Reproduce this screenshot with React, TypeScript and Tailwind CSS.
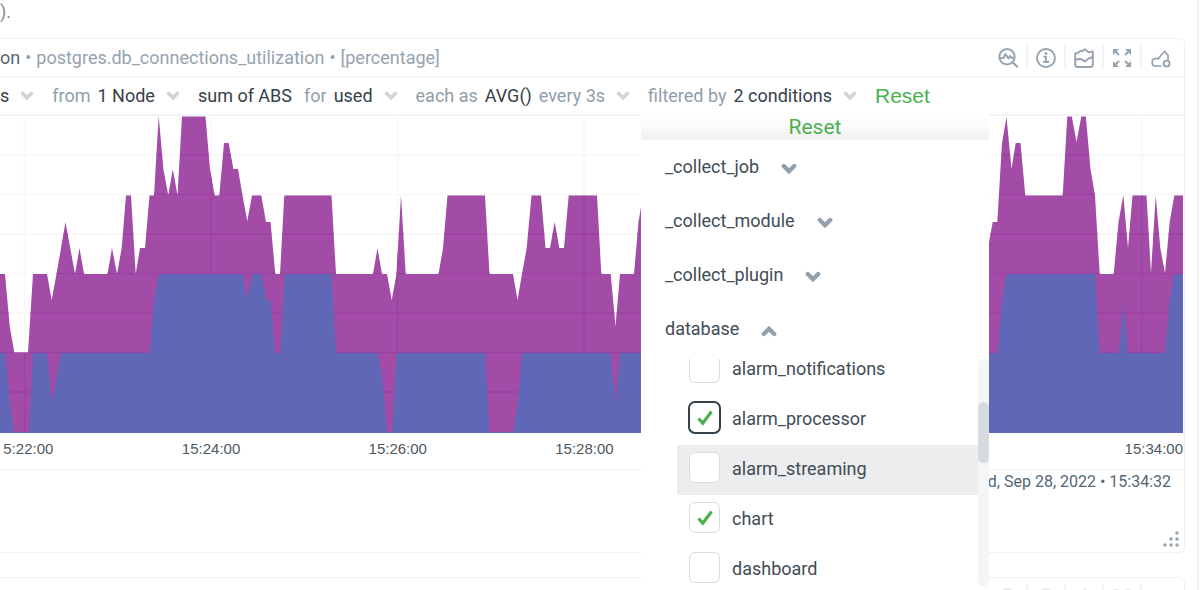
import React, { useState } from "react";

type Point = [number, number];

const totalSeries: Point[] = [
  [0, 274], [5, 274], [9.7, 326], [14.3, 352.5], [28, 352.5], [33, 274], [47, 274], [51.7, 300], [56.5, 274],
  [65.5, 222], [75, 274], [79.5, 248], [84, 274], [107.5, 274], [112, 248], [117, 274], [121.7, 248],
  [126, 195.5], [131, 195.5], [135.7, 274], [140, 248], [145, 248], [149.5, 195.5], [154, 195.5], [158.7, 116],
  [163.5, 170], [168.3, 195.5], [172.8, 169], [177.5, 195.5], [182, 116.5], [205.5, 116.5], [210, 169.5],
  [214.7, 195.5], [219.3, 195.5], [224, 143], [228.7, 143], [233.4, 169], [238, 169], [242.5, 195.5],
  [247.3, 221], [252, 195.5], [261.3, 195.5], [266, 222], [270.5, 222], [275.3, 274], [280, 274],
  [284.3, 195.5], [331.5, 195.5], [336, 274], [373, 274], [377.5, 248], [382, 274], [387, 274], [391.7, 300],
  [396.5, 274], [401, 195], [405.7, 274], [438.5, 274], [443, 248], [447.5, 195.5], [485, 195.5],
  [489.5, 274], [513, 274], [517.5, 300], [522, 274], [526.7, 248], [531.5, 195.5], [541, 195.5], [545.5, 248],
  [550, 248], [554.7, 222], [559.3, 248], [564, 248], [568.7, 195.5], [597, 195.5], [601.3, 274],
  [610.7, 274], [615.5, 326], [620, 274], [634, 274], [638.5, 222], [643, 195.5], [700, 195.5], [705, 274],
  [984, 274], [988, 248], [992.7, 222], [997.3, 222], [1002, 143], [1006.5, 117], [1011.5, 169],
  [1015.7, 143], [1020.5, 143], [1025.3, 195.5], [1062.7, 195.5], [1067.3, 116.5], [1071.8, 116.5],
  [1076.5, 142], [1081.3, 116.5], [1085.8, 116.5], [1090.5, 169], [1095, 195.5], [1099.7, 274], [1113.7, 274],
  [1118.5, 222], [1123.3, 195], [1128, 248], [1132.5, 195.5], [1146.5, 195.5], [1151, 273], [1155.7, 195.5],
  [1160.3, 248], [1165, 273], [1169.7, 222], [1174.3, 195.5], [1183, 195.5],
];

const usedSeries: Point[] = [
  [0, 353], [5.3, 353], [10, 405], [14, 432], [29, 432], [33, 353], [47, 353], [51.7, 403], [61, 353],
  [149.5, 353], [154, 300], [158.7, 274], [242.5, 274], [247, 300], [252, 274], [261.5, 274], [266, 300],
  [270.5, 300], [275, 353], [280.5, 353], [284.5, 274], [331.5, 274], [336, 353], [378, 353], [382.5, 379],
  [387, 432], [392, 432], [396.5, 353], [485, 353], [489.5, 432], [513, 432], [517.5, 405], [522, 353],
  [610.5, 353], [615.5, 403], [620, 353], [997.5, 353], [1002, 300], [1006.5, 274], [1095, 274],
  [1099.7, 353], [1118.7, 353], [1123.3, 302], [1128, 353], [1165, 353], [1169.7, 300], [1174.3, 274],
  [1183, 274],
];

const area = (points: Point[]) =>
  `M0 433 ${points.map(([x, y]) => `L${x} ${y}`).join(" ")} L1183 433Z`;

const gridPath =
  [155, 194.5, 234, 273.5, 313, 352.5, 392].map((y) => `M0 ${y}H1183`).join("") +
  [24.5, 211, 397.5, 584, 770, 957, 1142].map((x) => `M${x} 116V433`).join("");

function Chart() {
  return (
    <svg
      viewBox="0 116 1183 317"
      preserveAspectRatio="none"
      className="block h-[317px] w-full"
      role="img"
      aria-label="Connections utilization"
    >
      <defs>
        <clipPath id="total">
          <path d={area(totalSeries)} />
        </clipPath>
      </defs>
      <path d={gridPath} stroke="#f7f8f9" strokeWidth="1.5" fill="none" />
      <path d={area(totalSeries)} fill="#a24ca7" />
      <path d={gridPath} stroke="#9c40a3" strokeWidth="1.3" fill="none" clipPath="url(#total)" />
      <path d={area(usedSeries)} fill="#5f68b7" fillOpacity=".98" />
    </svg>
  );
}

function Chevron({ up = false, large = false }: { up?: boolean; large?: boolean }) {
  return (
    <svg
      viewBox="0 0 16 12"
      aria-hidden="true"
      className={large ? "h-3 w-4 text-[#93a1ac]" : "h-[10px] w-[14px] text-[#cfd5da]"}
    >
      <path
        d={up ? "M2.8 9 8 3.8 13.2 9" : "M2.8 3 8 8.2 13.2 3"}
        fill="none"
        stroke="currentColor"
        strokeWidth="4.4"
        strokeLinecap="round"
      />
    </svg>
  );
}

const iconProps = {
  viewBox: "0 0 22 22",
  className: "size-[22px]",
  fill: "none",
  stroke: "currentColor",
  strokeWidth: 1.9,
  strokeLinecap: "round" as const,
  strokeLinejoin: "round" as const,
};

const headerIcons: { label: string; icon: React.ReactNode }[] = [
  {
    label: "Metric correlations",
    icon: (
      <svg {...iconProps}>
        <circle cx="10" cy="9.7" r="7.7" />
        <path d="m15.8 15.5 4.2 4" strokeWidth="2.2" />
        <path d="M3 11h3.4l2-4 3 4.6L13.2 9l1.4 1.8h2" />
      </svg>
    ),
  },
  {
    label: "Information",
    icon: (
      <svg {...iconProps}>
        <circle cx="11" cy="11" r="9" />
        <path d="M9.2 9.6H11v5.2M8.8 15h4.6" />
        <circle cx="11" cy="6.6" r="1" fill="currentColor" strokeWidth=".8" />
      </svg>
    ),
  },
  {
    label: "Chart type",
    icon: (
      <svg {...iconProps}>
        <path d="M2.2 6.400 4.800 6 7.600 3.800 9.200 4.200 11.800 2.200 15.600 5.200 19.800 4.400V17.400a2.600 2.600 0 0 1-2.600 2.600H4.800a2.600 2.600 0 0 1-2.600-2.600Z" />
        <path d="m2.400 12.800 5-1 4.600 2.600 3.600-2.800 4.200-1.800" />
      </svg>
    ),
  },
  {
    label: "Fullscreen",
    icon: (
      <svg {...iconProps} strokeLinecap="butt">
        <path d="M3 3l5 5M19 3l-5 5M3 19l5-5M19 19l-5-5" strokeWidth="2" />
        <path d="M2 2h6L2 8ZM20 2h-6l6 6ZM2 20h6l-6-6ZM20 20h-6l6-6Z" fill="currentColor" stroke="none" />
      </svg>
    ),
  },
  {
    label: "Add to dashboard",
    icon: (
      <svg {...iconProps} strokeWidth={1.7}>
        <path d="M11 19H5.200A3 3 0 0 1 2.200 16.200L2.400 12.800 5.200 11.400 8.400 11.800 11 8.200 14.600 4.200 18 8.400V13" />
        <circle cx="16.600" cy="16.600" r="3" strokeWidth="1.900" />
      </svg>
    ),
  },
];

function HeaderActions({ muted = false }: { muted?: boolean }) {
  return (
    <div
      className={`ml-auto flex shrink-0 divide-x-2 divide-[#f1f3f4] pr-1 ${muted ? "text-[#e6e9eb]" : "text-[#95a3af]"}`}
    >
      {headerIcons.map(({ label, icon }) => (
        <button key={label} type="button" aria-label={label} className="flex h-[25px] w-[38px] items-center justify-center">
          {icon}
        </button>
      ))}
    </div>
  );
}

function Segment({ prefix, value, suffix, arrow = true }: { prefix?: string; value: string; suffix?: string; arrow?: boolean }) {
  return (
    <button type="button" className="flex shrink-0 items-center gap-[7px] text-[#8f9eaa]">
      {prefix && <span>{prefix}</span>}
      <span className="text-[#35414a]">{value}</span>
      {suffix && <span>{suffix}</span>}
      {arrow && (
        <span className="ml-1">
          <Chevron />
        </span>
      )}
    </button>
  );
}

const groups = ["_collect_job", "_collect_module", "_collect_plugin", "database"];
const options = ["alarm_notifications", "alarm_processor", "alarm_streaming", "chart", "dashboard"];

function FilterMenu() {
  const [selected, setSelected] = useState<string[]>(["alarm_processor", "chart"]);
  const toggle = (name: string) =>
    setSelected((list) => (list.includes(name) ? list.filter((item) => item !== name) : [...list, name]));

  return (
    <div className="absolute top-[75px] left-[641px] w-[348px] bg-white pb-20 text-[#414c55]">
      <div className="flex h-[26px] items-center justify-center bg-linear-to-b from-white via-[#fafafa] to-[#f0f0f0]">
        <button type="button" className="text-[21px] leading-6 text-[#4caf50]">
          Reset
        </button>
      </div>
      <div className="pl-6 text-lg">
        {groups.map((name) => (
          <button key={name} type="button" className="flex h-[54px] items-center gap-[22px]">
            {name}
            <span className="pt-1">
              <Chevron large up={name === "database"} />
            </span>
          </button>
        ))}
      </div>
      <div className="mt-[3px] flex h-[227px] overflow-hidden">
        <div className="-mt-[14px] flex-1 pl-9">
          {options.map((name) => (
            <label
              key={name}
              className={`flex h-[50px] items-center gap-3 pb-[3px] pl-3 text-lg ${name === "alarm_streaming" ? "bg-[#ebedee]" : ""}`}
            >
              <span className="mb-[2px] flex size-[31px] shrink-0 items-center justify-center">
                <span className="grid place-items-center">
                  <input
                    type="checkbox"
                    checked={selected.includes(name)}
                    onChange={() => toggle(name)}
                    className={`col-start-1 row-start-1 appearance-none bg-white ${
                      name === "alarm_processor"
                        ? "-m-px size-[33px] rounded-[7px] border-2 border-[#35414a]"
                        : "size-[31px] rounded-md border border-[#d8dde1]"
                    }`}
                  />
                  {selected.includes(name) && (
                    <svg viewBox="0 0 16 16" className="pointer-events-none col-start-1 row-start-1 size-4" aria-hidden="true">
                      <path d="m1.500 8.500 4.300 4.700L14.500 1.500" fill="none" stroke="#4caf50" strokeWidth="3.200" />
                    </svg>
                  )}
                </span>
              </span>
              {name}
            </label>
          ))}
        </div>
        <div className="w-[11px] rounded-full bg-[#f3f5f6] pt-[43px]">
          <div className="h-[61px] rounded-full bg-[#d5dade]" />
        </div>
      </div>
    </div>
  );
}

const ticks = ["5:22:00", "15:24:00", "15:26:00", "15:28:00", "15:30:00", "15:32:00"];

export default function App() {
  return (
    <div className="flex h-screen overflow-hidden bg-white font-['Roboto',sans-serif] text-lg">
      <main className="min-w-0 flex-1 pr-3">
        <p className="-mt-[2px] flex h-10 items-start text-[#7d8d99]">).</p>

        <section className="relative rounded-r-md border border-l-0 border-[#eff1f2]">
          <header className="flex h-[39px] items-center border-b-2 border-[#f4f5f6]">
            <h2 className="flex gap-[5px] text-[#95a3af]">
              <span className="text-[#536775]">on</span>
              <span>•</span>
              <span>postgres.db_connections_utilization</span>
              <span>•</span>
              <span>[percentage]</span>
            </h2>
            <HeaderActions />
          </header>

          <div className="flex h-[38px] items-center gap-[18px] border-b-2 border-[#f3f4f5]">
            <Segment value="s" />
            <Segment prefix="from" value="1 Node" />
            <div className="flex gap-3">
              <Segment value="sum of ABS" arrow={false} />
              <Segment prefix="for" value="used" />
            </div>
            <Segment prefix="each as" value="AVG()" suffix="every 3s" />
            <Segment prefix="filtered by" value="2 conditions" />
            <button type="button" className="font-['Liberation_Sans',sans-serif] text-[21px] leading-6 text-[#4caf50]">
              Reset
            </button>
          </div>

          <div className="pr-px">
            <Chart />
            <div className="flex h-[38px] border-b-2 border-[#f5f6f7] pt-1 font-['Liberation_Sans',sans-serif] text-[15px] leading-6 text-[#4d5861]">
              <div className="-ml-[69px] grid flex-1 grid-cols-[187fr_187fr_187fr_187fr_187fr_187fr_132fr]">
                {ticks.map((tick, index) => (
                  <span key={tick} className={`text-center ${index === 0 ? "pl-2" : ""}`}>
                    {tick}
                  </span>
                ))}
                <span className="text-right">15:34:00</span>
              </div>
            </div>
          </div>

          <footer className="flex h-[81px] flex-col items-end justify-between pr-1 pb-1">
            <time className="pr-[9px] text-base leading-[22px] text-[#536775]">Wed, Sep 28, 2022 • 15:34:32</time>
            <svg viewBox="0 0 18 18" className="size-[18px] text-[#95a3af]" fill="currentColor" aria-hidden="true">
              <circle cx="15" cy="3" r="1.700" />
              <circle cx="9" cy="9" r="1.700" />
              <circle cx="15" cy="9" r="1.700" />
              <circle cx="3" cy="15" r="1.700" />
              <circle cx="9" cy="15" r="1.700" />
              <circle cx="15" cy="15" r="1.700" />
            </svg>
          </footer>

          <FilterMenu />
        </section>

        <section className="mt-6 rounded-tr-md border-t border-r border-[#eff1f2]">
          <header className="flex h-[39px] items-center">
            <HeaderActions muted />
          </header>
        </section>
      </main>
      <div className="w-[3px] border-l-2 border-[#f3f4f5]" />
    </div>
  );
}
